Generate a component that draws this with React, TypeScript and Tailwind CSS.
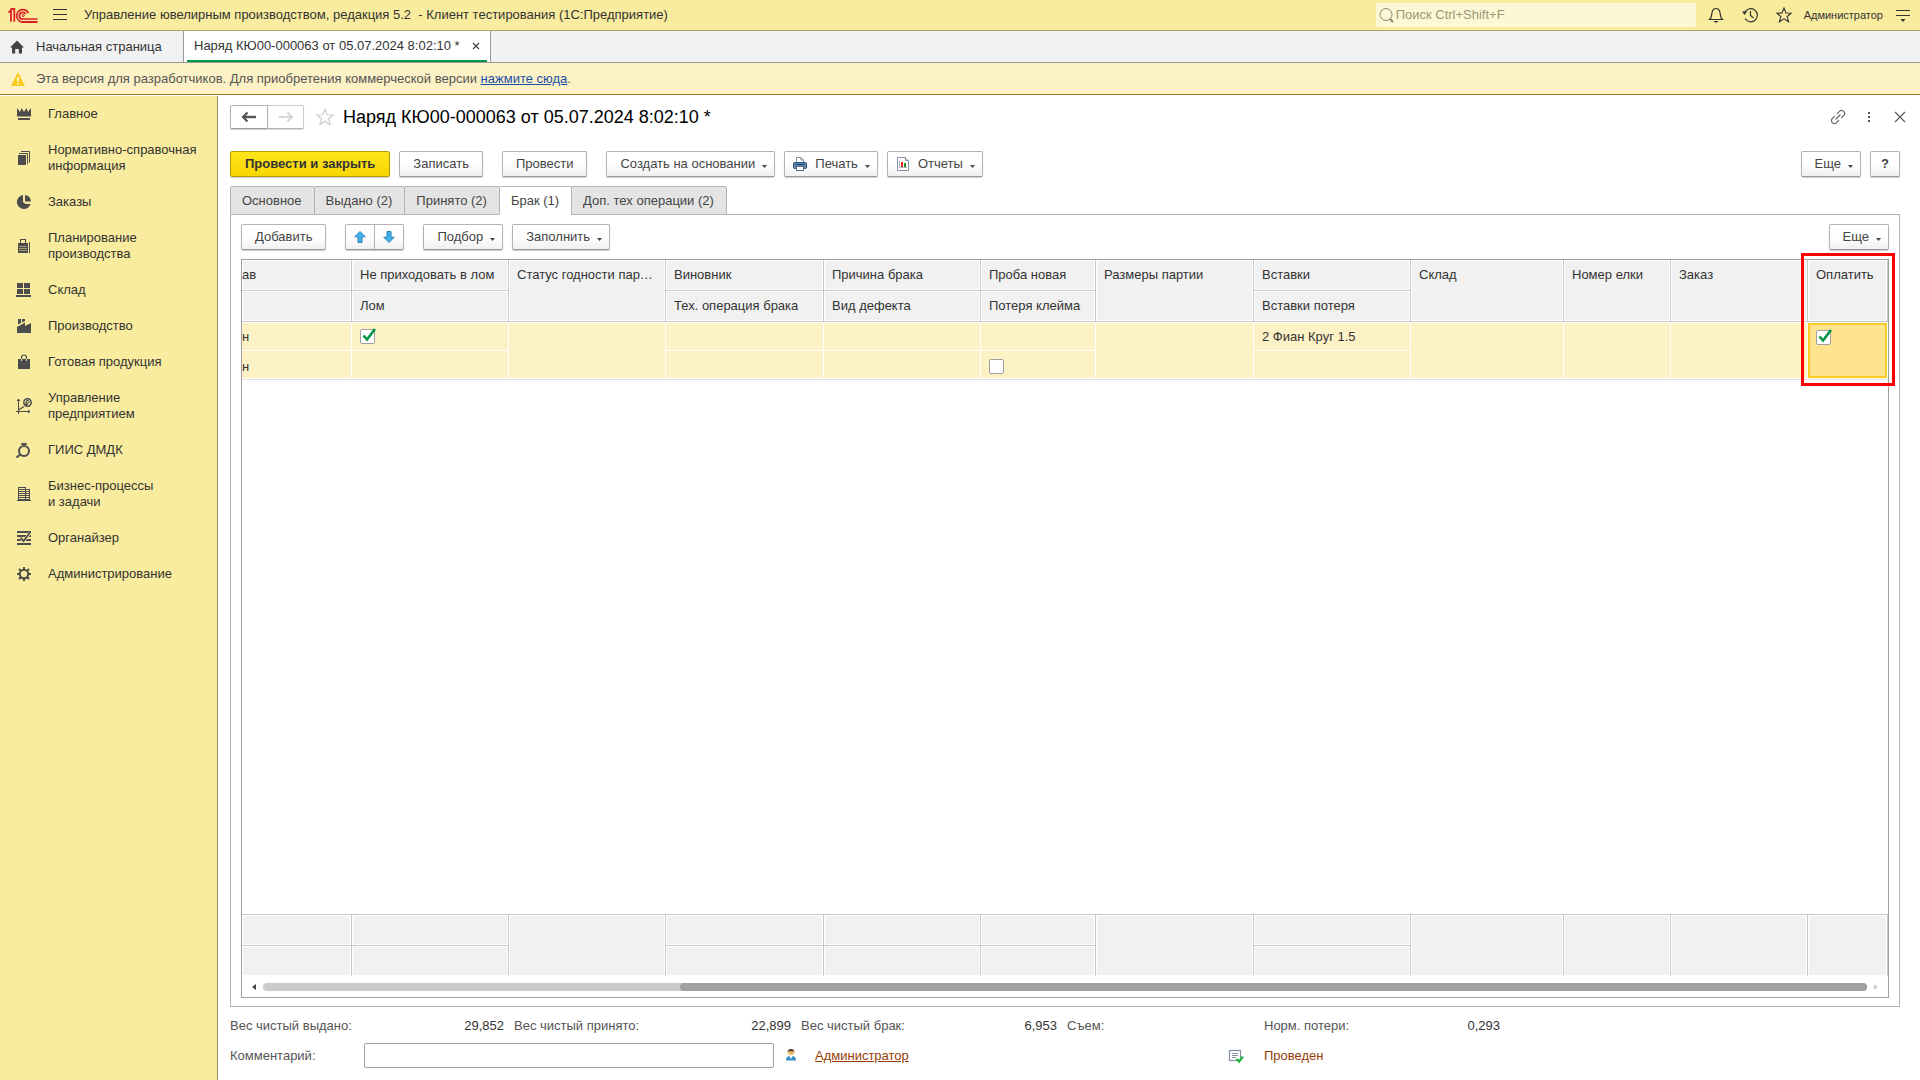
import React from 'react';

const FONT = "font-['Liberation_Sans',Arial,sans-serif]";

/* ---------- icons ---------- */

const Svg = ({ children, size = 16 }: { children: React.ReactNode; size?: number }) => (
  <svg width={size} height={size} viewBox={`0 0 ${size} ${size}`} fill="none" className="shrink-0" aria-hidden="true">
    {children}
  </svg>
);

const Logo = () => (
  <svg width="30" height="15" viewBox="0 0 30 15" fill="none" stroke="#dd1f26" className="shrink-0" aria-hidden="true">
    <path d="M0.5 4.5 L3 2.2 V13.8" strokeWidth="1.8" />
    <path d="M2.5 1 H6.3 V13.8" strokeWidth="1.8" />
    <path d="M20.4 5 A6.2 6.2 0 1 0 15 14 H29.5" strokeWidth="1.8" />
    <path d="M17.6 6.2 A3.3 3.3 0 1 0 15 11 H29.5" strokeWidth="1.7" />
    <circle cx="15.2" cy="7.6" r="1.1" strokeWidth="1" />
  </svg>
);

const icons: Record<string, React.ReactNode> = {
  main: (
    <g fill="#4c4c4c">
      <path d="M1 2 L4 6 L5.5 2 L8 6 L10.5 2 L12 6 L15 2 V10.5 H1 Z" />
      <rect x="2" y="12" width="12" height="2" />
    </g>
  ),
  docs: (
    <g>
      <rect x="2" y="5" width="8" height="10" fill="#4c4c4c" />
      <path d="M3 3.5 H11.5 V14 M5 1.5 H13.5 V12.5" stroke="#4c4c4c" />
    </g>
  ),
  orders: (
    <g fill="#4c4c4c">
      <path d="M7 1.1 V8 L9.5 10 H14.6 A7 7 0 1 1 7 1.1 Z" />
      <path d="M9 1 A7 7 0 0 1 15 7.5 H9 Z" />
    </g>
  ),
  plan: (
    <g>
      <path d="M2 5 H4 V1 H10 V5 H12 V15 H2 Z" fill="#4c4c4c" />
      <rect x="5" y="2" width="4" height="3" fill="#f9ec9e" />
      <path d="M3.5 8.5 H11 M3.5 10.5 H11 M3.5 12.5 H11" stroke="#f9ec9e" strokeDasharray="1 1" />
      <path d="M13.5 4 V15" stroke="#4c4c4c" />
    </g>
  ),
  stock: (
    <g fill="#4c4c4c">
      <rect x="1" y="1" width="6" height="5" />
      <rect x="8" y="1" width="6" height="5" />
      <rect x="1" y="7" width="6" height="5" />
      <rect x="8" y="7" width="6" height="5" />
      <rect x="0" y="13" width="15" height="2" />
    </g>
  ),
  factory: (
    <g fill="#4c4c4c">
      <path d="M2 1 H5 V5 L2 6.5 Z M6 1 H9 V3 L6 4.5 Z" />
      <path d="M1 9 L9 4.5 V8 L15 5 V15 H1 Z" />
    </g>
  ),
  bag: (
    <g>
      <path d="M2 5 H14 V15 H2 Z" fill="#4c4c4c" />
      <path d="M5.5 5 V3.5 A2.5 2.5 0 0 1 10.5 3.5 V5" stroke="#4c4c4c" strokeWidth="1.2" />
      <path d="M5.5 5 V7 M10.5 5 V7" stroke="#f9ec9e" />
    </g>
  ),
  chart: (
    <g stroke="#4c4c4c">
      <path d="M2.5 1 V16 M0 13.5 H14" />
      <path d="M1 3 L2.5 1 L4 3 M12 12 L14 13.5 L12 15" />
      <path d="M2.5 12 L8 8.5" strokeWidth="1.4" />
      <circle cx="11.5" cy="4.5" r="3.7" strokeWidth="1.5" />
      <path d="M10.5 7.5 V2.5 H12 A1.2 1.2 0 0 1 12 5 H9 M9 6.5 H12" />
    </g>
  ),
  giis: (
    <g>
      <circle cx="8" cy="9" r="5" stroke="#4c4c4c" strokeWidth="2" />
      <path d="M4.5 2 L6 0.7 H10 L11.5 2 L8 6 Z" fill="#4c4c4c" stroke="#f9ec9e" strokeWidth="0.6" />
      <path d="M0.5 15.5 L4.3 12.5" stroke="#4c4c4c" strokeWidth="2" />
    </g>
  ),
  building: (
    <g>
      <path d="M2 1 H10 V3 H14 V14 H15 V15 H1 V14 H2 Z" fill="#4c4c4c" />
      <path d="M3 2.5 H9 M3 4.5 H9 M3 6.5 H9 M3 8.5 H9 M3 10.5 H9 M3 12.5 H9 M10 4.5 H13 M10 6.5 H13 M10 8.5 H13 M10 10.5 H13 M10 12.5 H13" stroke="#f9ec9e" />
    </g>
  ),
  organizer: (
    <g stroke="#4c4c4c">
      <path d="M1 2 H15 M1 6 H15 M1 10 H15 M1 14 H15" strokeWidth="1.8" />
      <path d="M4.5 7.5 L7.5 11 L14 3" stroke="#f9ec9e" strokeWidth="3" />
      <path d="M4.5 7.5 L7.5 11 L14 2.5" strokeWidth="1.8" />
    </g>
  ),
  gear: (
    <g stroke="#4c4c4c">
      <circle cx="8" cy="8" r="4.2" strokeWidth="2" />
      <path
        d="M8 1 V3.5 M8 12.5 V15 M1 8 H3.5 M12.5 8 H15 M3 3 L4.8 4.8 M11.2 11.2 L13 13 M3 13 L4.8 11.2 M11.2 4.8 L13 3"
        strokeWidth="2"
      />
    </g>
  ),
};

const STAR = 'M8 1 L10 6 L15.2 6.2 L11.1 9.5 L12.6 14.8 L8 11.8 L3.4 14.8 L4.9 9.5 L0.8 6.2 L6 6 Z';

const PrinterIcon = () => (
  <Svg>
    <path d="M4.5 7 V1.5 H9 L11.5 4 V7" fill="#fff" stroke="#8492a6" />
    <path d="M9 1.5 V4 H11.5" stroke="#8492a6" />
    <rect x="1.5" y="6.5" width="13" height="6" rx="1" fill="#5b86ae" stroke="#2f587f" />
    <path d="M3 8.5 H13" stroke="#244a6e" />
    <rect x="4.5" y="10.5" width="7" height="4" fill="#fff" stroke="#5b6b80" />
  </Svg>
);

const ReportIcon = () => (
  <Svg>
    <path d="M2.5 1.5 H10.5 L13.5 4.5 V14.5 H2.5 Z" fill="#fff" stroke="#8492a6" />
    <path d="M10.5 1.5 V4.5 H13.5" fill="#d5dbe3" stroke="#8492a6" />
    <path d="M4.5 5 V11.500 H12" stroke="#a8b2c0" />
    <rect x="6" y="6" width="2" height="5" fill="#f01c1c" />
    <rect x="9" y="7" width="2" height="4" fill="#159a1c" />
  </Svg>
);

const BlueArrow = ({ down }: { down?: boolean }) => (
  <Svg>
    <path
      d={down ? 'M8 13.5 L2.8 8.2 H6 V2.5 H10 V8.2 H13.2 Z' : 'M8 2.5 L2.8 7.8 H6 V13.5 H10 V7.8 H13.2 Z'}
      fill="#3fb2f0"
      stroke="#2d7fb5"
    />
  </Svg>
);

const Caret = () => (
  <svg width="5" height="3" viewBox="0 0 5 3" className="mt-1 ml-auto shrink-0" aria-hidden="true">
    <path d="M0 0 H5 L2.5 3 Z" fill="#444" />
  </svg>
);

/* ---------- controls ---------- */

const BTN =
  'flex h-[26px] items-center rounded-xs border border-[#b3b3b3] border-b-[#999] bg-linear-to-b from-white from-50% to-[#f0f0f0] text-[#444] shadow-[0_1px_1px_rgba(0,0,0,0.2)] whitespace-nowrap';

const Button = ({ children, menu, className = 'px-[13px]' }: { children: React.ReactNode; menu?: boolean; className?: string }) => (
  <button type="button" className={`${BTN} ${className}`}>
    {children}
    {menu && <Caret />}
  </button>
);

const MENU = 'gap-[7px] pl-[13px] pr-[7px]';
const MENU_ICON = 'gap-[7px] px-[7px]';

const Check = ({ label, checked }: { label: string; checked?: boolean }) => (
  <span className="relative block size-[15px]">
    <input
      type="checkbox"
      aria-label={label}
      defaultChecked={checked}
      className="peer block size-[15px] appearance-none rounded-xs border border-[#a0a0a0] bg-white"
    />
    <svg
      width="18"
      height="16"
      viewBox="0 0 18 16"
      className="pointer-events-none absolute -top-px left-0 hidden peer-checked:block"
      aria-hidden="true"
    >
      <path d="M3.5 7.5 L7 11.5 L15 1" stroke="#009646" strokeWidth="2.6" fill="none" />
    </svg>
  </span>
);

/* ---------- data ---------- */

const sections: [string, string][] = [
  ['main', 'Главное'],
  ['docs', 'Нормативно-справочная\nинформация'],
  ['orders', 'Заказы'],
  ['plan', 'Планирование\nпроизводства'],
  ['stock', 'Склад'],
  ['factory', 'Производство'],
  ['bag', 'Готовая продукция'],
  ['chart', 'Управление\nпредприятием'],
  ['giis', 'ГИИС ДМДК'],
  ['building', 'Бизнес-процессы\nи задачи'],
  ['organizer', 'Органайзер'],
  ['gear', 'Администрирование'],
];

const tabs = ['Основное', 'Выдано (2)', 'Принято (2)', 'Брак (1)', 'Доп. тех операции (2)'];

interface Column {
  width: number;
  top: string;
  bottom?: string; // no second line: the cell spans both rows
  topValue?: React.ReactNode;
  bottomValue?: React.ReactNode;
  clipped?: boolean;
  selected?: boolean;
}

const columns: Column[] = [
  { width: 110, top: 'ав', bottom: '', topValue: 'н', bottomValue: 'н', clipped: true },
  { width: 157, top: 'Не приходовать в лом', bottom: 'Лом', topValue: <Check label="Не приходовать в лом" checked /> },
  { width: 157, top: 'Статус годности партии' },
  { width: 158, top: 'Виновник', bottom: 'Тех. операция брака' },
  { width: 157, top: 'Причина брака', bottom: 'Вид дефекта' },
  { width: 115, top: 'Проба новая', bottom: 'Потеря клейма', bottomValue: <Check label="Потеря клейма" /> },
  { width: 158, top: 'Размеры партии' },
  { width: 157, top: 'Вставки', bottom: 'Вставки потеря', topValue: '2 Фиан Круг 1.5' },
  { width: 153, top: 'Склад' },
  { width: 107, top: 'Номер елки' },
  { width: 137, top: 'Заказ' },
  { width: 80, top: 'Оплатить', topValue: <Check label="Оплатить" checked />, selected: true },
];

const isDouble = (c: Column) => c.bottom !== undefined;

const Cols = () => (
  <colgroup>
    {columns.map(c => (
      <col key={c.top} style={{ width: c.width }} />
    ))}
  </colgroup>
);

const HEAD = 'border-r border-b border-[#c8c8c8] bg-[#f1f1f1] shadow-[inset_0_0_0_1px_#fff] align-top text-left font-normal';
const pad = (c: Column) => (c.clipped ? 'pr-2' : 'pl-2 pr-2.5');

/* ---------- page ---------- */

const TopBar = () => (
  <header className="flex h-[31px] items-center border-b border-[#aca571] bg-[#f9ec9e] pr-[9px] pl-2 text-[#333]">
    <Logo />
    <button type="button" aria-label="Меню" className="ml-3.5">
      <Svg>
        <path d="M1 2.5 H15 M1 7.5 H15 M1 12.5 H15" stroke="#333" />
      </Svg>
    </button>
    <span className="ml-4 whitespace-pre">Управление ювелирным производством, редакция 5.2  - Клиент тестирования (1С:Предприятие)</span>
    <label className="ml-auto flex h-6 w-80 items-center rounded-xs bg-[#fdf7d6] pl-0.5">
      <Svg>
        <circle cx="8" cy="7.5" r="6" stroke="#8b8770" />
        <path d="M12 12 L15 15" stroke="#8b8770" strokeWidth="2" />
      </Svg>
      <input aria-label="Поиск" placeholder="Поиск Ctrl+Shift+F" className="ml-0.5 w-full bg-transparent outline-none placeholder:text-[#9b9778]" />
    </label>
    <div className="ml-3 flex items-center gap-[18px]">
      <button type="button" aria-label="Оповещения">
        <Svg>
          <path d="M1.5 12.5 C4 10.5 3.5 8 4 5.5 C4.5 3 6 1.5 8 1.5 C10 1.5 11.5 3 12 5.5 C12.5 8 12 10.5 14.5 12.5 Z" stroke="#333" strokeWidth="1.2" />
          <path d="M5.5 14 H10.5 L9 15.5 H7 Z" fill="#333" />
        </Svg>
      </button>
      <button type="button" aria-label="История">
        <Svg>
          <path d="M2.5 6 A6.6 6.6 0 1 1 3 11.5" stroke="#333" strokeWidth="1.2" />
          <path d="M0.2 4.5 L5.2 4.5 L2.4 8 Z" fill="#333" />
          <path d="M8.5 4 V8.5 L11.5 11" stroke="#333" strokeWidth="1.2" />
        </Svg>
      </button>
      <button type="button" aria-label="Избранное">
        <Svg>
          <path d={STAR} stroke="#333" strokeWidth="1.1" />
        </Svg>
      </button>
    </div>
    <button type="button" className="ml-3 text-[11px]">Администратор</button>
    <button type="button" aria-label="Настройки" className="ml-3">
      <Svg>
        <path d="M1 3.5 H15 M1 8.5 H15" stroke="#333" strokeWidth="1.2" />
        <path d="M5.5 12 H10.5 L8 15 Z" fill="#333" />
      </Svg>
    </button>
  </header>
);

const WindowTabs = () => (
  <nav className="flex h-8 border-b border-[#999] bg-[#f1f1f1] text-[#333]">
    <a href="#home" className="flex w-[183px] items-center gap-[11px] pl-[9px]">
      <Svg>
        <path d="M8 1.5 L15 8.5 H13 V14.5 H9.8 V10 H6.2 V14.5 H3 V8.5 H1 Z" fill="#444" />
      </Svg>
      Начальная страница
    </a>
    <div className="flex border-x border-[#999] bg-white px-[3px]">
      <div className="flex items-center border-b-2 border-[#009646] px-[7px]">
        <a href="#order">Наряд КЮ00-000063 от 05.07.2024 8:02:10 *</a>
        <button type="button" aria-label="Закрыть вкладку" className="ml-3">
          <Svg size={8}>
            <path d="M1 1 L7 7 M7 1 L1 7" stroke="#444" strokeWidth="1.2" />
          </Svg>
        </button>
      </div>
    </div>
  </nav>
);

const Notice = () => (
  <div className="flex h-8 items-center gap-2.5 border-b border-[#947c18] bg-[#fdf2c6] pl-2.5 text-[#555]">
    <Svg>
      <path d="M8 1 L15 15 H1 Z" fill="#fbcb1c" />
      <path d="M8 6 V10.5 M8 12 V13.5" stroke="#fff" strokeWidth="1.6" />
    </Svg>
    <p>
      Эта версия для разработчиков. Для приобретения коммерческой версии{' '}
      <a href="#buy" className="text-[#1a4fa8] underline">нажмите сюда</a>.
    </p>
  </div>
);

const Sidebar = () => (
  <aside className="mt-px w-[218px] shrink-0 border-r border-[#9a905a] bg-[#f9ec9e] text-[#333]">
    {sections.map(([icon, title]) => (
      <a key={icon} href={`#${icon}`} className="flex items-center gap-4 py-2.5 pl-4 leading-4 whitespace-pre-line">
        <Svg>{icons[icon]}</Svg>
        {title}
      </a>
    ))}
  </aside>
);

const TitleRow = () => (
  <div className="flex h-6 items-center">
    <div className="flex h-6">
      <button type="button" aria-label="Назад" className="flex w-[38px] items-center justify-center rounded-l-xs border border-[#b3b3b3] border-b-[#999] shadow-[0_1px_1px_rgba(0,0,0,0.2)]">
        <Svg>
          <path d="M3 8 H15" stroke="#555" strokeWidth="2.4" />
          <path d="M6.5 3.5 L2 8 L6.5 12.5" stroke="#555" strokeWidth="2.2" />
        </Svg>
      </button>
      <button type="button" aria-label="Вперед" className="flex w-9 items-center justify-center rounded-r-xs border border-l-0 border-[#ccc] border-b-[#b3b3b3] shadow-[0_1px_1px_rgba(0,0,0,0.15)]">
        <Svg>
          <path d="M1 8 H13" stroke="#d5d5d5" strokeWidth="2" />
          <path d="M9.5 3.5 L14 8 L9.5 12.5" stroke="#d5d5d5" strokeWidth="2" />
        </Svg>
      </button>
    </div>
    <button type="button" aria-label="В избранное" className="ml-3">
      <svg width="18" height="18" viewBox="0 0 16 16" fill="none" aria-hidden="true">
        <path d={STAR} stroke="#ccc" />
      </svg>
    </button>
    <h1 className="ml-[9px] text-[18px] text-black">Наряд КЮ00-000063 от 05.07.2024 8:02:10 *</h1>
    <div className="-mr-2 ml-auto flex items-center gap-[15px]">
      <button type="button" aria-label="Ссылка">
        <Svg>
          <g stroke="#666" strokeWidth="1.2" transform="rotate(-45 8 8)">
            <path d="M6.5 5 H3 A3 3 0 0 0 3 11 H6.5 M9.5 5 H13 A3 3 0 0 1 13 11 H9.5" />
            <path d="M4.500 8 H11.500" />
          </g>
        </Svg>
      </button>
      <button type="button" aria-label="Еще действия">
        <Svg>
          <path d="M7 3 H9 V5 H7 Z M7 7 H9 V9 H7 Z M7 11 H9 V13 H7 Z" fill="#555" />
        </Svg>
      </button>
      <button type="button" aria-label="Закрыть">
        <Svg>
          <path d="M3 3 L13 13 M13 3 L3 13" stroke="#555" strokeWidth="1.1" />
        </Svg>
      </button>
    </div>
  </div>
);

const DefectTable = () => {
  const doubles = columns.filter(isDouble);
  return (
    <div className="relative mt-[9px] flex flex-1 flex-col border border-[#a0a0a0] text-[#333]">
      <table className="w-full table-fixed border-separate border-spacing-0">
        <Cols />
        <thead>
          <tr className="h-[31px]">
            {columns.map(c => (
              <th key={c.top} rowSpan={isDouble(c) ? 1 : 2} className={`${HEAD} ${pad(c)}`}>
                <div className="truncate leading-[30px]">{c.top}</div>
              </th>
            ))}
          </tr>
          <tr className="h-[31px]">
            {doubles.map(c => (
              <th key={c.top} className={`${HEAD} ${pad(c)}`}>
                <div className="truncate leading-[30px]">{c.bottom}</div>
              </th>
            ))}
          </tr>
        </thead>
        <tbody>
          <tr className="h-[29px]">
            {columns.map(c => (
              <td
                key={c.top}
                rowSpan={isDouble(c) ? 1 : 2}
                className={`border-t border-r border-b border-white ${pad(c)} ${isDouble(c) ? 'py-0' : 'py-[7px] align-top'} ${
                  c.selected ? 'bg-[#ffe48f] shadow-[inset_0_0_0_2px_#fbcb23]' : 'bg-[#fdf2c6]'
                }`}
              >
                {c.topValue}
              </td>
            ))}
          </tr>
          <tr className="h-7">
            {doubles.map(c => (
              <td key={c.top} className={`border-r border-b border-white bg-[#fdf2c6] pt-1 pb-0 ${pad(c)}`}>
                {c.bottomValue}
              </td>
            ))}
          </tr>
        </tbody>
      </table>
      <div className="flex-1 border-t border-[#e2e2e2]" />
      <table className="w-full table-fixed border-separate border-spacing-0 border-t border-[#c8c8c8]" aria-label="Итоги">
        <Cols />
        <tbody>
          <tr className="h-[31px]">
            {columns.map(c => (
              <td
                key={c.top}
                rowSpan={isDouble(c) ? 1 : 2}
                className={`border-r border-[#c8c8c8] bg-[#f1f1f1] shadow-[inset_0_0_0_1px_#fff] ${isDouble(c) ? 'border-b' : ''}`}
              />
            ))}
          </tr>
          <tr className="h-[30px]">
            {doubles.map(c => (
              <td key={c.top} className="border-r border-[#c8c8c8] bg-[#f1f1f1] shadow-[inset_0_0_0_1px_#fff]" />
            ))}
          </tr>
        </tbody>
      </table>
      <div className="flex h-[21px] items-center px-2">
        <Svg size={8}>
          <path d="M6 1 V7 L2 4 Z" fill="#444" />
        </Svg>
        <div className="mx-[5px] flex h-2 flex-1 justify-end rounded-full bg-[#cbcbcb]">
          <div className="w-[74%] rounded-full bg-[#a0a0a0]" />
        </div>
        <Svg size={8}>
          <path d="M2 1 V7 L6 4 Z" fill="#ccc" />
        </Svg>
      </div>
      {/* highlight around the last column */}
      <div className="pointer-events-none absolute -top-[7px] -right-[7px] h-[133px] w-[94px] border-3 border-[#ff0000]" />
    </div>
  );
};

const Total = ({ label, value, className }: { label: string; value?: string; className: string }) => (
  <div className={`flex justify-between ${className}`}>
    <span>{label}</span>
    <span className="text-[#333]">{value}</span>
  </div>
);

const Footer = () => (
  <footer className="text-[#555]">
    <div className="mt-[9px] flex h-5 items-center gap-2.5">
      <Total className="w-[274px]" label="Вес чистый выдано:" value="29,852" />
      <Total className="w-[277px]" label="Вес чистый принято:" value="22,899" />
      <Total className="w-64" label="Вес чистый брак:" value="6,953" />
      <Total className="w-[187px]" label="Съем:" />
      <Total className="w-[236px]" label="Норм. потери:" value="0,293" />
    </div>
    <div className="mt-[7px] flex h-[25px] items-center">
      <label htmlFor="comment" className="w-[134px]">Комментарий:</label>
      <input id="comment" type="text" className="h-[25px] w-[410px] rounded-xs border border-[#a0a0a0] bg-white px-2 outline-none" />
      <span className="ml-[9px]">
        <Svg>
          <path d="M3 12.5 C3 9 4.5 8 8 8 C11.5 8 13 9 13 12.5 Z" fill="#3a93c8" />
          <path d="M6.5 8 L8 11 L9.5 8 Z" fill="#fff" />
          <circle cx="8" cy="4.2" r="3" fill="#f0b869" />
          <path d="M4.6 5 A3.4 3.9 0 0 1 11.4 5 L10.5 3.200 H5.500 Z" fill="#4a3a28" />
        </Svg>
      </span>
      <a href="#author" className="ml-4 w-[413px] text-[#963c05]">
        <span className="underline">Администратор</span>
      </a>
      <Svg>
        <rect x="1.5" y="2.5" width="11" height="10" fill="#fff" stroke="#8492a6" strokeWidth="1.2" />
        <path d="M4 5.5 H10 M4 7.5 H10 M4 9.5 H8" stroke="#8492a6" />
        <path d="M8.5 11 L11 13.5 L15 8.5" stroke="#1fb53a" strokeWidth="2.2" />
      </Svg>
      <span className="ml-5 text-[#963c05]">Проведен</span>
    </div>
  </footer>
);

export default function App() {
  return (
    <div className={`flex min-h-screen flex-col bg-white text-[13px] leading-4 ${FONT}`}>
      <TopBar />
      <WindowTabs />
      <Notice />
      <div className="flex flex-1">
        <Sidebar />
        <main className="flex min-w-0 flex-1 flex-col pt-2.5 pr-5 pb-3 pl-3">
          <TitleRow />
          <div className="mt-[22px] flex items-center gap-[9px]">
            <button
              type="button"
              className="h-[26px] rounded-xs border border-[#b39b00] bg-linear-to-b from-[#ffe61a] to-[#f7d600] px-3.5 font-bold whitespace-nowrap text-[#333] shadow-[0_1px_1px_rgba(0,0,0,0.2)]"
            >
              Провести и закрыть
            </button>
            <Button>Записать</Button>
            <span className="w-px" />
            <Button>Провести</Button>
            <span className="w-px" />
            <Button menu className={MENU}>Создать на основании</Button>
            <Button menu className={MENU_ICON}><PrinterIcon />Печать</Button>
            <Button menu className={MENU_ICON}><ReportIcon />Отчеты</Button>
            <span className="flex-1" />
            <Button menu className={MENU}>Еще</Button>
            <Button className="px-2.5 font-bold">?</Button>
          </div>

          <div role="tablist" className="mt-[9px] flex h-7 items-stretch">
            {tabs.map((t, i) => (
              <button
                key={t}
                type="button"
                role="tab"
                aria-selected={i === 3}
                className={`relative z-10 -mb-px rounded-t-xs border border-[#b3b3b3] pr-3 pl-[11px] text-[#444] ${i > 0 ? '-ml-px' : ''} ${
                  i === 3 ? 'border-b-white bg-white' : 'bg-[#e4e4e4]'
                }`}
              >
                {t}
              </button>
            ))}
          </div>
          <section className="flex flex-1 flex-col border border-[#b3b3b3] px-2.5 pt-[9px] pb-2">
            <div className="flex items-center gap-[9px]">
              <Button>Добавить</Button>
              <span className="w-px" />
              <div className="flex">
                <Button className="w-[30px] justify-center rounded-r-none"><BlueArrow /></Button>
                <Button className="-ml-px w-[30px] justify-center rounded-l-none"><BlueArrow down /></Button>
              </div>
              <span className="w-px" />
              <Button menu className={MENU}>Подбор</Button>
              <Button menu className={MENU}>Заполнить</Button>
              <span className="flex-1" />
              <Button menu className={MENU}>Еще</Button>
            </div>
            <DefectTable />
          </section>
          <Footer />
        </main>
      </div>
    </div>
  );
}
